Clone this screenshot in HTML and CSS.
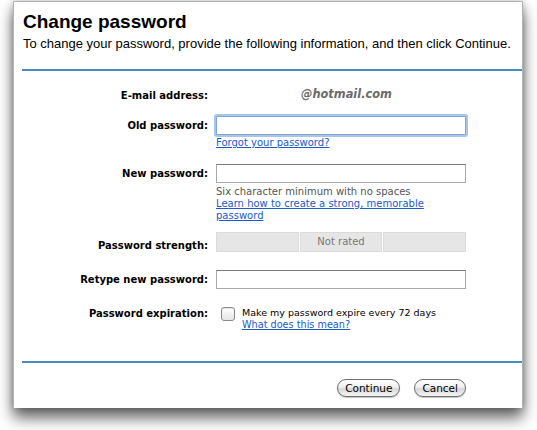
FILE: index.html
```html
<!DOCTYPE html>
<html>
<head>
<meta charset="utf-8">
<link rel="stylesheet" href="styles.css">
</head>
<body>
<div class="window">
  <h1 class="title">Change password</h1>
  <p class="intro">To change your password, provide the following information, and then click Continue.</p>
  <div class="rule"></div>
  <div class="form">
    <div class="row row-email">
      <div class="label">E-mail address:</div>
      <div class="field"><span class="email">@hotmail.com</span></div>
    </div>
    <div class="row row-old">
      <div class="label">Old password:</div>
      <div class="field">
        <div class="input focus"></div>
        <a class="link" href="#">Forgot your password?</a>
      </div>
    </div>
    <div class="row row-new">
      <div class="label">New password:</div>
      <div class="field">
        <div class="input"></div>
        <div class="hint">Six character minimum with no spaces</div>
        <a class="link hintlink" href="#">Learn how to create a strong, memorable password</a>
      </div>
    </div>
    <div class="row row-strength">
      <div class="label">Password strength:</div>
      <div class="field">
        <div class="meter">
          <div class="cell"></div>
          <div class="cell">Not rated</div>
          <div class="cell"></div>
        </div>
      </div>
    </div>
    <div class="row row-retype">
      <div class="label">Retype new password:</div>
      <div class="field"><div class="input"></div></div>
    </div>
    <div class="row row-expire">
      <div class="label">Password expiration:</div>
      <div class="field expire">
        <span class="checkbox"></span>
        <div class="expire-text">
          <div>Make my password expire every 72 days</div>
          <a class="link" href="#">What does this mean?</a>
        </div>
      </div>
    </div>
  </div>
  <div class="rule rule-bottom"></div>
  <div class="buttons">
    <button class="btn">Continue</button>
    <button class="btn">Cancel</button>
  </div>
</div>
</body>
</html>
```
FILE: styles.css
```css
html, body {
  margin: 0;
  padding: 0;
  background: #ffffff;
}
body {
  width: 537px;
  height: 430px;
  overflow: hidden;
}
.window {
  margin: 1px 0 0 13px;
  width: 508px;
  height: 406px;
  background: #ffffff;
  border: 1px solid #b4b4b4;
  border-bottom: none;
  box-shadow: 0 10px 14px rgba(0, 0, 0, 0.6), 0 0 7px rgba(0, 0, 0, 0.25);
  box-sizing: content-box;
  font-family: "DejaVu Sans", Verdana, sans-serif;
  color: #000;
}
.title {
  margin: 0;
  padding: 9px 0 0 9px;
  font-family: "Liberation Sans", Arial, sans-serif;
  font-weight: bold;
  font-size: 19px;
  line-height: 22px;
}
.intro {
  margin: 3px 0 0 9px;
  font-family: "Liberation Sans", Arial, sans-serif;
  font-size: 13px;
  line-height: 16px;
}
.rule {
  margin: 17px 0 0 8px;
  height: 2px;
  background: #4a8bc2;
}
.form {
  padding-top: 16px;
}
.row {
  display: grid;
  grid-template-columns: 194px 250px;
  column-gap: 8px;
  align-items: start;
}
.label {
  text-align: right;
  font-weight: bold;
  font-size: 10px;
  line-height: 19px;
}
.field {
  font-size: 10px;
  line-height: 12px;
}
.email {
  display: block;
  padding-left: 85px;
  font-weight: bold;
  font-style: italic;
  font-size: 11.4px;
  line-height: 15px;
  color: #6b6b6b;
}
.row-email .label { line-height: 17px; }
.row-old { margin-top: 12px; }
.row-new { margin-top: 14px; }
.row-strength { margin-top: 10px; }
.row-strength .label { padding-top: 4px; }
.row-retype { margin-top: 15px; }
.row-expire { margin-top: 18px; }
.input {
  box-sizing: border-box;
  width: 250px;
  height: 19px;
  border: 1px solid #a9a9a9;
  border-top-color: #7a7a7a;
  background: #fff;
}
.input.focus {
  border: 1px solid #7fa6d4;
  box-shadow: 0 0 0 2px #a9c6e8;
  border-radius: 1px;
}
.link {
  display: block;
  color: #1c5ac8;
  text-decoration: underline;
  font-size: 10px;
  line-height: 14px;
}
.row-old .link { margin-top: 1px; }
.hint {
  margin-top: 3px;
  color: #555;
}
.hintlink {
  line-height: 12px;
}
.meter {
  display: flex;
  height: 20px;
  gap: 1px;
}
.cell {
  flex: 1;
  background: #e6e6e6;
  border: 1px solid #dadada;
  color: #777;
  font-size: 10px;
  line-height: 18px;
  text-align: center;
}
.expire {
  display: flex;
  align-items: flex-start;
  gap: 7px;
  padding-left: 5px;
}
.checkbox {
  display: block;
  flex: none;
  width: 12px;
  height: 12px;
  margin-top: 0;
  border: 1px solid #8a8a8a;
  border-radius: 3px;
  background: linear-gradient(#ffffff, #e4e4e4);
  box-shadow: inset 0 1px 1px rgba(0,0,0,0.1);
}
.expire-text {
  font-size: 9.5px;
  line-height: 12px;
}
.expire-text .link { font-size: 9.7px; line-height: 12px; }
.row-expire .label { line-height: 14px; }
.rule-bottom {
  margin-top: 30px;
}
.buttons {
  display: flex;
  justify-content: flex-end;
  gap: 14px;
  padding: 16px 56px 0 0;
}
.btn {
  height: 18px;
  padding: 0 7px;
  border: 1px solid #6f6f6f;
  border-radius: 9px;
  background: linear-gradient(#ffffff 0%, #f0f0f0 45%, #d8d8d8 55%, #f4f4f4 100%);
  box-shadow: 0 1px 1px rgba(0,0,0,0.25);
  font-family: "DejaVu Sans", Verdana, sans-serif;
  font-size: 10.5px;
  line-height: 16px;
  color: #000;
}
```
